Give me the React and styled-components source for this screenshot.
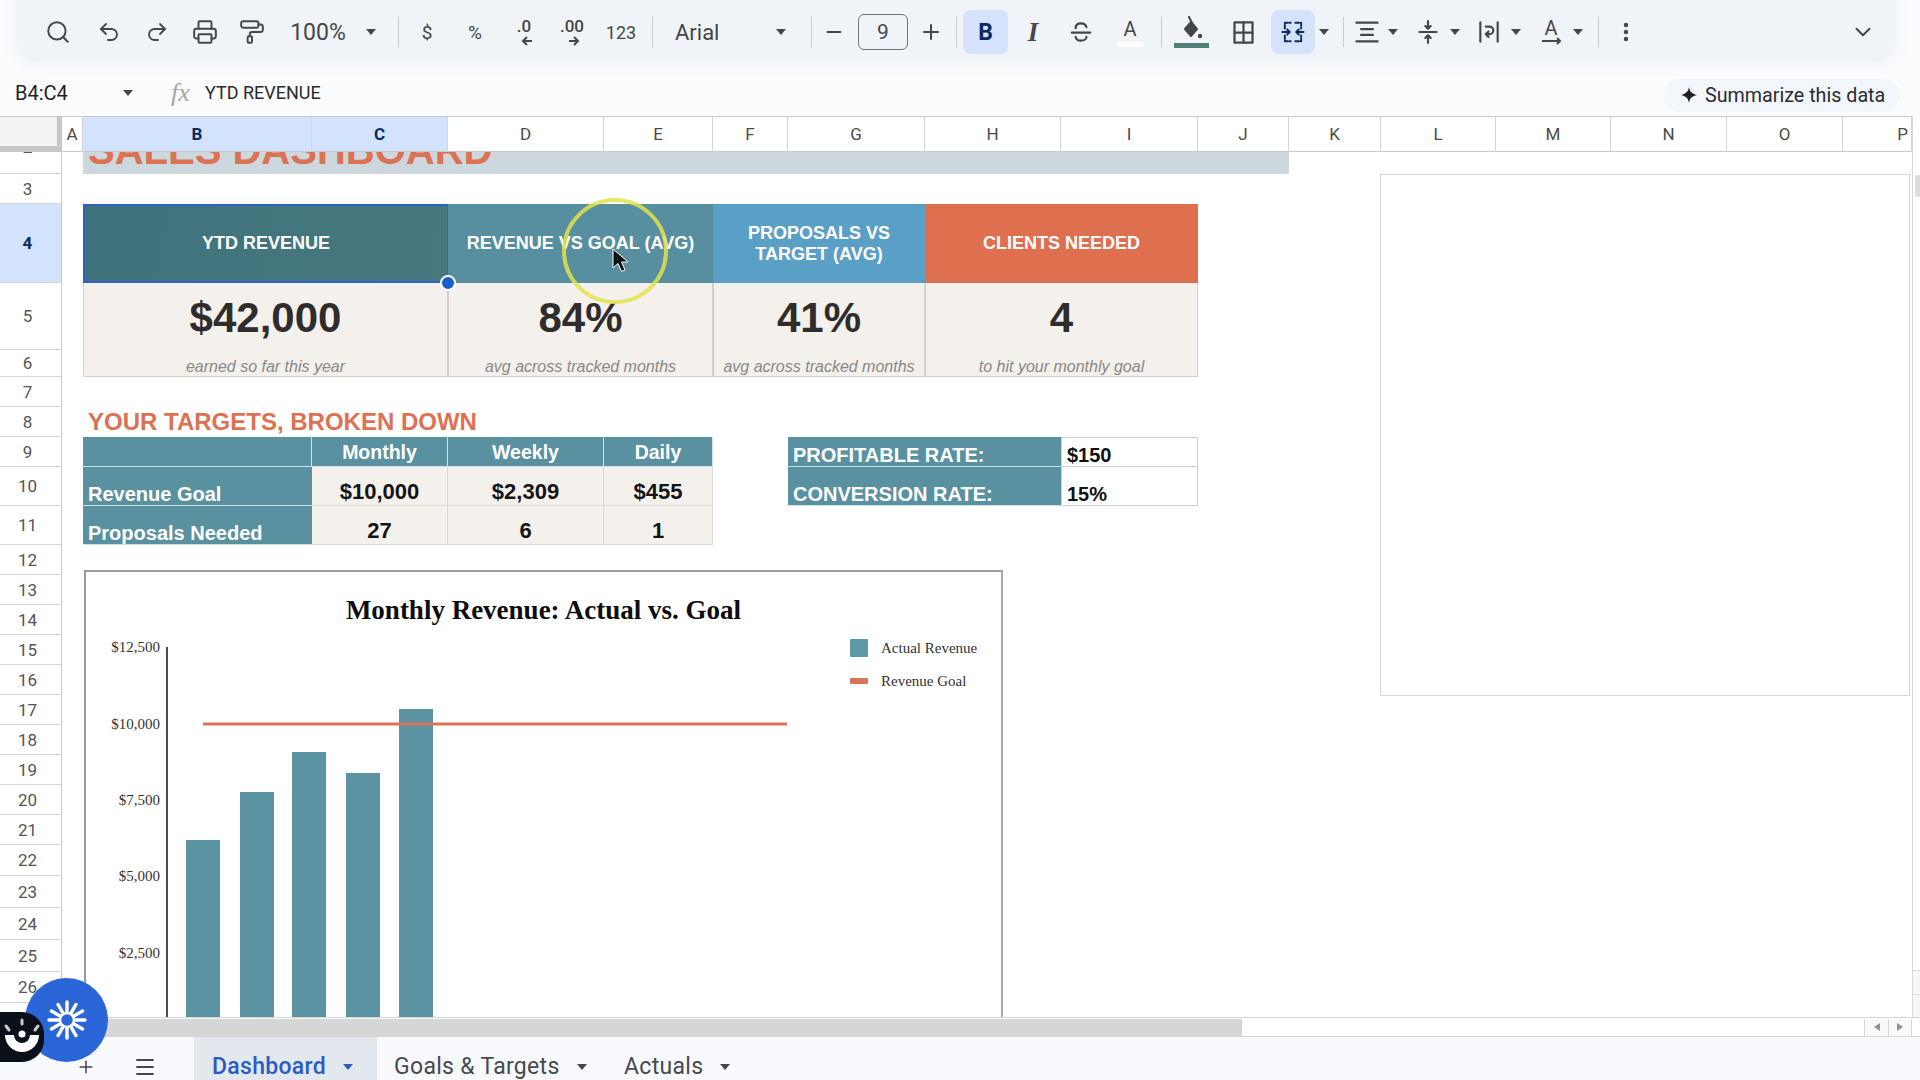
import React from "react";
import styled, { createGlobalStyle } from "styled-components";
import { Search, Undo2, Redo2, Printer, PaintRoller, MoreVertical, ChevronDown, Plus, Menu, Minus } from "lucide-react";

const Global = createGlobalStyle`
  html, body { margin: 0; padding: 0; background: #fff; overflow: hidden; }
  * { box-sizing: border-box; }
`;

const SANS = `"Liberation Sans", Arial, sans-serif`;
const UI = `Roboto, "Liberation Sans", sans-serif`;
const SERIF = `"Liberation Serif", "Times New Roman", serif`;
const TEAL = "#5a91a1";
const CREAM = "#f4f0ec";
const ORANGE = "#dc7254";
const INK = "#444746";

const Page = styled.div`
  position: relative;
  width: 1920px;
  height: 1080px;
  display: flex;
  flex-direction: column;
  overflow: hidden;
  background: #fbfcfe;
`;

const Toolbar = styled.div`
  flex: none;
  height: 62px;
  margin: 0 24px 0 16px;
  padding: 2px 16px 0 0;
  display: flex;
  align-items: center;
  background: #f0f4f9;
  border-radius: 0 0 20px 20px;
  box-shadow: 0 0 12px 6px #f4f7fb;
  color: ${INK};
`;

const Slot = styled.div`
  flex: none;
  width: ${(p) => p.$w}px;
  margin-left: ${(p) => p.$gap}px;
  height: 44px;
  display: flex;
  align-items: center;
  justify-content: ${(p) => p.$align || "center"};
  border-radius: 8px;
  background: ${(p) => (p.$active ? "#d6e2fb" : "transparent")};
  color: ${(p) => (p.$active ? "#0b2a63" : INK)};
  font-family: ${UI};
  white-space: nowrap;
`;

const ToolText = styled.span`
  font-family: ${UI};
  font-size: ${(p) => p.$size || 21}px;
  color: ${(p) => p.$color || INK};
`;

const Caret = styled.span`
  display: inline-block;
  flex: none;
  width: 0;
  height: 0;
  border-left: 5px solid transparent;
  border-right: 5px solid transparent;
  border-top: 6px solid ${(p) => p.$color || INK};
`;

const Sep = styled.span`
  display: block;
  width: 1px;
  height: 30px;
  background: #c9cdd2;
`;

const SizeBox = styled.div`
  width: 50px;
  height: 36px;
  border: 1.5px solid #6f7377;
  border-radius: 6px;
  display: flex;
  align-items: center;
  justify-content: center;
  font-family: ${UI};
  font-size: 21px;
  color: ${INK};
`;

const BoldB = styled.span`
  font-family: ${UI};
  font-size: 23px;
  font-weight: 700;
  color: #0b2a63;
`;

const ItalicI = styled.span`
  font-family: ${SERIF};
  font-size: 27px;
  font-style: italic;
  font-weight: 700;
  color: ${INK};
`;

const FillWrap = styled.div`
  display: flex;
  flex-direction: column;
  align-items: center;
  gap: 1px;
`;

const ColorBar = styled.span`
  display: block;
  width: ${(p) => p.$w}px;
  height: 5px;
  background: ${(p) => p.$color};
`;

const FormulaBar = styled.div`
  flex: none;
  height: 54px;
  display: flex;
  align-items: center;
  padding: 7px 20px 0 15px;
`;

const CellRef = styled.div`
  width: 108px;
  font-family: ${UI};
  font-size: 20px;
  color: #1f1f1f;
`;

const Fx = styled.span`
  margin-left: 38px;
  width: 34px;
  font-family: ${SERIF};
  font-size: 26px;
  font-style: italic;
  color: #a4a6a8;
`;

const FormulaText = styled.span`
  flex: 1;
  font-family: ${UI};
  font-size: 18px;
  color: #2a2a2a;
`;

const SummaryPill = styled.div`
  width: 236px;
  height: 33px;
  margin-top: 5px;
  display: flex;
  align-items: center;
  gap: 8px;
  padding-left: 17px;
  border-radius: 17px;
  background: #f3f6fb;
  font-family: ${UI};
  font-size: 19.7px;
  color: #2a2c30;
  white-space: nowrap;
`;

const Sheet = styled.div`
  position: relative;
  flex: none;
  height: 901px;
  overflow: hidden;
  background: #fff;
  display: grid;
  grid-template-columns: 62px 21px 229px 136px 156px 109px 75px 137px 136px 137px 91px 92px 115px 115px 116px 116px 69px 8px;
  grid-template-rows: 36px 22px 30px 79px 67px 27px 30px 30px 30px 39px 39px 30px 30px 30px 30px 30px 30px 30px 30px 30px 30px 31px 32px 32px 32px 31px 32px 40px;
`;

const Corner = styled.div`
  grid-column: 1;
  grid-row: 1;
  background: #f3f3f3;
  border-top: 1px solid #c9c9c9;
  border-right: 5px solid #c7c7c7;
  border-bottom: 6px solid #c7c7c7;
`;

const ColHead = styled.div`
  grid-column: ${(p) => p.$col};
  grid-row: 1;
  display: flex;
  align-items: center;
  justify-content: ${(p) => (p.$end ? "flex-end" : "center")};
  padding-right: ${(p) => (p.$end ? "3px" : "0")};
  background: ${(p) => (p.$on ? "#d3e3fd" : "#fff")};
  border-top: 1px solid #c9c9c9;
  border-right: 1px solid #d4d4d4;
  border-bottom: 1px solid #c9c9c9;
  font-family: ${UI};
  font-size: 17px;
  font-weight: ${(p) => (p.$on ? 700 : 400)};
  color: ${(p) => (p.$on ? "#0b2a63" : "#4a4a4a")};
`;

const RowHead = styled.div`
  grid-column: 1;
  grid-row: ${(p) => p.$row};
  display: flex;
  align-items: ${(p) => (p.$peek ? "flex-start" : "center")};
  justify-content: center;
  overflow: hidden;
  padding-right: 6px;
  background: ${(p) => (p.$on ? "#d3e3fd" : "#fff")};
  border-right: 1px solid #c9c9c9;
  border-bottom: 1px solid #d4d4d4;
  font-family: ${UI};
  font-size: 17px;
  line-height: 20px;
  font-weight: ${(p) => (p.$on ? 700 : 400)};
  color: ${(p) => (p.$on ? "#0b2a63" : "#555")};
`;

const PeekDigit = styled.span`
  margin-top: -15px;
`;

const TitleBand = styled.div`
  grid-column: 3 / 12;
  grid-row: 2;
  display: flex;
  align-items: flex-end;
  overflow: hidden;
  padding: 0 0 4px 5px;
  background: #ccd8dd;
  font-family: ${SANS};
  font-size: 40px;
  line-height: 40px;
  font-weight: 700;
  color: ${ORANGE};
  white-space: nowrap;
`;

const CardHead = styled.div`
  grid-column: ${(p) => p.$cols};
  grid-row: 4;
  display: flex;
  align-items: center;
  justify-content: center;
  text-align: center;
  padding: 0 8px;
  background: ${(p) => p.$bg};
  border: ${(p) => (p.$selected ? "2px solid #2f62c6" : "none")};
  border-right-width: ${(p) => (p.$selected ? "1px" : "0")};
  font-family: ${SANS};
  font-size: 18px;
  line-height: 21px;
  font-weight: 700;
  color: #fff;
`;

const CardValue = styled.div`
  grid-column: ${(p) => p.$cols};
  grid-row: 5;
  display: flex;
  align-items: center;
  justify-content: center;
  padding-top: 2px;
  background: ${CREAM};
  border-left: 1px solid #d2cfcc;
  border-right: 1px solid #d2cfcc;
  font-family: ${SANS};
  font-size: 42px;
  font-weight: 700;
  color: #2f2d2c;
`;

const CardSub = styled.div`
  grid-column: ${(p) => p.$cols};
  grid-row: 6;
  display: flex;
  align-items: flex-end;
  justify-content: center;
  padding-bottom: 1px;
  background: ${CREAM};
  border-left: 1px solid #d2cfcc;
  border-right: 1px solid #d2cfcc;
  border-bottom: 1.5px solid #d2cfcc;
  font-family: ${SANS};
  font-size: 16px;
  line-height: 17px;
  font-style: italic;
  color: #8a8886;
  white-space: nowrap;
`;

const SectionTitle = styled.div`
  grid-column: 3 / 9;
  grid-row: 8;
  display: flex;
  align-items: center;
  padding-left: 5px;
  font-family: ${SANS};
  font-size: 24px;
  font-weight: 700;
  color: ${ORANGE};
  white-space: nowrap;
`;

const TableHead = styled.div`
  grid-column: ${(p) => p.$col};
  grid-row: 9;
  display: flex;
  align-items: center;
  justify-content: center;
  padding-top: 1px;
  background: ${TEAL};
  border-right: 1.5px solid #cfe2e7;
  border-bottom: 1.5px solid #cfe2e7;
  font-family: ${SANS};
  font-size: 19.5px;
  font-weight: 700;
  color: #fff;
`;

const TableLabel = styled.div`
  grid-column: 3;
  grid-row: ${(p) => p.$row};
  display: flex;
  align-items: flex-end;
  padding-left: 5px;
  background: ${TEAL};
  border-bottom: 1.5px solid #cfe2e7;
  font-family: ${SANS};
  font-size: 20px;
  line-height: 21px;
  font-weight: 700;
  color: #fff;
  white-space: nowrap;
`;

const TableValue = styled.div`
  grid-column: ${(p) => p.$col};
  grid-row: ${(p) => p.$row};
  display: flex;
  align-items: flex-end;
  justify-content: center;
  background: ${CREAM};
  border-right: 1px solid #dcd8d4;
  border-bottom: 1px solid #dcd8d4;
  font-family: ${SANS};
  font-size: 22px;
  font-weight: 700;
  color: #141414;
`;

const RateLabel = styled.div`
  grid-column: 8 / 10;
  grid-row: ${(p) => p.$row};
  display: flex;
  align-items: flex-end;
  padding-left: 5px;
  background: ${TEAL};
  border-bottom: 1.5px solid #cfe2e7;
  font-family: ${SANS};
  font-size: 20px;
  line-height: 21px;
  font-weight: 700;
  color: #fff;
  white-space: nowrap;
`;

const RateValue = styled.div`
  grid-column: 10;
  grid-row: ${(p) => p.$row};
  display: flex;
  align-items: flex-end;
  padding-left: 5px;
  background: #fff;
  border: 1px solid #cfcfcf;
  border-top-width: ${(p) => (p.$row === 9 ? "1px" : "0")};
  font-family: ${SANS};
  font-size: 20px;
  line-height: 21px;
  font-weight: 700;
  color: #111;
`;

const VTrack = styled.div`
  grid-column: 18;
  grid-row: 1 / 29;
  position: relative;
  border-left: 1.5px solid #d8d8d8;
  background: #fff;
`;

const VThumb = styled.div`
  position: absolute;
  top: 59px;
  left: 2px;
  right: 0;
  height: 22px;
  border-radius: 3px 0 0 3px;
  background: #dcdcdc;
`;

const VArrow = styled.div`
  position: absolute;
  left: 0;
  right: 0;
  top: ${(p) => p.$top}px;
  height: 24px;
  border-top: 1px solid #d8d8d8;
  background: #f7f7f7;
`;

const Chart = styled.div`
  position: absolute;
  left: 84px;
  top: 454px;
  width: 919px;
  height: 520px;
  background: #fff;
  border: 2px solid #9b9b9b;
  border-bottom: none;
  border-right-color: #a8a8a8;
`;

const ChartTitle = styled.div`
  height: 40px;
  margin-top: 18px;
  display: flex;
  align-items: center;
  justify-content: center;
  font-family: ${SERIF};
  font-size: 27px;
  font-weight: 700;
  color: #0d0d0d;
`;

const PlotRow = styled.div`
  display: flex;
`;

const Plot = styled.svg`
  flex: none;
  display: block;
`;

const Legend = styled.div`
  display: flex;
  flex-direction: column;
  gap: 15px;
  padding-top: 9px;
`;

const LegendRow = styled.div`
  display: flex;
  align-items: center;
  gap: 13px;
  height: 18px;
  font-family: ${SERIF};
  font-size: 15px;
  color: #333;
  white-space: nowrap;
`;

const Swatch = styled.span`
  flex: none;
  width: 18px;
  height: ${(p) => p.$h}px;
  background: ${(p) => p.$color};
  border-radius: 1px;
`;

const BlankChart = styled.div`
  position: absolute;
  left: 1380px;
  top: 58px;
  width: 530px;
  height: 522px;
  background: #fff;
  border: 1.5px solid #d6d6d6;
`;

const Handle = styled.div`
  position: absolute;
  left: 440px;
  top: 159px;
  width: 16px;
  height: 16px;
  border-radius: 50%;
  background: #1a5ec9;
  border: 2px solid #fff;
`;

const CursorMark = styled.svg`
  position: absolute;
  left: 558px;
  top: 79px;
`;

const HScroll = styled.div`
  flex: none;
  height: 20px;
  display: flex;
  align-items: center;
  padding-left: 50px;
  background: #fff;
  border-top: 1.5px solid #d4d4d4;
  border-bottom: 1.5px solid #d4d4d4;
`;

const HThumb = styled.div`
  width: 1192px;
  height: 17px;
  background: #d6d6d6;
`;

const HSpacer = styled.div`
  flex: 1;
`;

const HArrow = styled.div`
  width: 24px;
  height: 17px;
  display: flex;
  align-items: center;
  justify-content: center;
  border-left: 1px solid #d4d4d4;
  background: #f9f9f9;
  &:last-of-type { margin-right: 8px; border-right: 1px solid #d4d4d4; }
`;

const ArrowGlyph = styled.span`
  width: 0;
  height: 0;
  border-top: 4px solid transparent;
  border-bottom: 4px solid transparent;
  ${(p) => (p.$left ? "border-right: 6px solid #909090;" : "border-left: 6px solid #909090;")}
`;

const TabBar = styled.div`
  flex: 1;
  display: flex;
  align-items: stretch;
  padding-left: 76px;
  background: #f8f9fc;
`;

const TabIcon = styled.div`
  width: ${(p) => p.$w}px;
  display: flex;
  align-items: center;
  justify-content: center;
  padding-top: 16px;
  color: ${INK};
`;

const Tab = styled.div`
  width: ${(p) => p.$w}px;
  display: flex;
  align-items: center;
  gap: 17px;
  padding: 16px 0 0 ${(p) => p.$pad}px;
  background: ${(p) => (p.$on ? "#e3e7ee" : "transparent")};
  font-family: ${UI};
  font-size: 23px;
  font-weight: ${(p) => (p.$on ? 500 : 400)};
  color: ${(p) => (p.$on ? "#2a5cc4" : "#464a4d")};
  letter-spacing: 0.3px;
  white-space: nowrap;
`;

const BlueBubble = styled.div`
  position: absolute;
  left: 25px;
  top: 978px;
  width: 83px;
  height: 84px;
  display: flex;
  align-items: center;
  justify-content: center;
  border-radius: 50%;
  background: #2b66d9;
`;

const DarkBadge = styled.div`
  position: absolute;
  left: 0;
  top: 1012px;
  width: 44px;
  height: 50px;
  display: flex;
  align-items: center;
  justify-content: center;
  border-radius: 0 22px 22px 0;
  background: #0b0f1a;
`;

const S = { fill: "none", stroke: "currentColor", strokeWidth: 2, strokeLinecap: "round", strokeLinejoin: "round" };

const Ico = ({ children, size = 26, width = 2 }) => (
  <svg width={size} height={size} viewBox="0 0 24 24" {...S} strokeWidth={width}>{children}</svg>
);

const Decimal = ({ label, dir, w }) => (
  <svg width={w} height="32" viewBox={`0 0 ${w} 32`} fill="none">
    <text x={w / 2} y="16" textAnchor="middle" fontFamily="Roboto, sans-serif" fontWeight="500" fontSize="17" fill={INK}>{label}</text>
    {dir === "l" ? (
      <path d={`M${w / 2 + 8} 25h-9 M${w / 2 + 3} 21l-4 4 4 4`} stroke={INK} strokeWidth="2" />
    ) : (
      <path d={`M${w / 2 - 3} 25h9 M${w / 2 + 2} 21l4 4-4 4`} stroke={INK} strokeWidth="2" />
    )}
  </svg>
);

const tools = [
  [58, 30, <Search size={26} strokeWidth={1.8} />],
  [109, 30, <Undo2 size={24} strokeWidth={1.8} />],
  [157, 30, <Redo2 size={24} strokeWidth={1.8} />],
  [205, 30, <Printer size={26} strokeWidth={1.8} />],
  [252, 30, <PaintRoller size={26} strokeWidth={1.8} />],
  [318, 60, <ToolText $size={23}>100%</ToolText>],
  [371, 14, <Caret />],
  [398, 3, <Sep />],
  [427, 20, <ToolText $size={19}>$</ToolText>],
  [475, 24, <ToolText $size={19}>%</ToolText>],
  [524, 34, <Decimal label=".0" dir="l" w={34} />],
  [572, 36, <Decimal label=".00" dir="r" w={36} />],
  [621, 36, <ToolText $size={18}>123</ToolText>],
  [652, 3, <Sep />],
  [720, 90, <ToolText $size={22}>Arial</ToolText>, "flex-start"],
  [781, 14, <Caret />],
  [811, 3, <Sep />],
  [834, 24, <Minus size={22} strokeWidth={2} />],
  [883, 50, <SizeBox>9</SizeBox>],
  [931, 28, <Plus size={24} strokeWidth={2} />],
  [956, 3, <Sep />],
  [985.5, 45, <BoldB>B</BoldB>, "center", true],
  [1033, 30, <ItalicI>I</ItalicI>],
  [1081, 30, (
    <Ico size={26}>
      <path d="M7 8.5C7 5 9.5 4 12 4s4.5 1.2 5 3.5" />
      <path d="M3.5 12.5h17" />
      <path d="M7 16.5c.4 2.400 2.500 3.500 5 3.500s5-1.200 5-3.500" />
    </Ico>
  )],
  [1130, 30, (
    <FillWrap>
      <ToolText $size={20}>A</ToolText>
      <ColorBar $w={26} $color="#ffffff" />
    </FillWrap>
  )],
  [1161, 3, <Sep />],
  [1191, 36, (
    <FillWrap>
      <svg width="24" height="26" viewBox="0 0 24 26" fill="none">
        <path d="M10 1l3 6" stroke={INK} strokeWidth="2" strokeLinecap="round" />
        <path d="M12 6l6 7-6 7-6-7z" fill={INK} stroke={INK} strokeWidth="2" strokeLinejoin="round" />
        <circle cx="21" cy="20" r="2.200" fill={INK} />
      </svg>
      <ColorBar $w={35} $color="#4f7f78" />
    </FillWrap>
  )],
  [1243, 30, (
    <Ico size={27}>
      <rect x="4" y="3" width="16" height="18" />
      <path d="M12 3v18M4 12h16" />
    </Ico>
  )],
  [1293, 44, (
    <Ico size={28} width={1.7}>
      <path d="M5 9V4h5M14 4h5v5M5 15v5h5M14 20h5v-5" strokeDasharray="3 1.500" />
      <path d="M3 12h6M7 9.800l2.200 2.200L7 14.200M21 12h-6M17 9.800 14.800 12l2.200 2.200" />
    </Ico>
  ), "center", true],
  [1324, 14, <Caret />],
  [1343, 3, <Sep />],
  [1367, 28, (
    <Ico size={28}>
      <path d="M3 4h18M7 9.500h10M7 14.500h10M3 20h18" />
    </Ico>
  )],
  [1393, 14, <Caret />],
  [1428, 28, (
    <Ico size={26}>
      <path d="M4 12h16M12 2v6.500M9.500 6.500l2.500 2.500 2.500-2.500M12 22v-6.500M9.500 17.500l2.500-2.500 2.500 2.500" />
    </Ico>
  )],
  [1455, 14, <Caret />],
  [1489, 28, (
    <Ico size={26}>
      <path d="M4 3v18M20 3v18M9 7h3.500a3.500 3.500 0 0 1 0 7H9M11.500 11.500 9 14l2.500 2.500" />
    </Ico>
  )],
  [1516, 14, <Caret />],
  [1551, 28, (
    <svg width="28" height="30" viewBox="0 0 28 30" fill="none">
      <text x="14" y="18" textAnchor="middle" fontFamily="Roboto, sans-serif" fontSize="20" fill={INK}>A</text>
      <path d="M5 24h18M20 21l3 3-3 3" stroke={INK} strokeWidth="2" />
    </svg>
  )],
  [1578, 14, <Caret />],
  [1598, 3, <Sep />],
  [1626, 24, <MoreVertical size={24} strokeWidth={2.400} />],
  [1863, 30, <ChevronDown size={26} strokeWidth={1.800} />],
];

const OFFSET = 16;
const placed = tools.reduce(
  (acc, [center, w, node, align, active]) => {
    const start = center - w / 2;
    acc.items.push({ gap: start - acc.end, w, node, align, active, key: center });
    acc.end = start + w;
    return acc;
  },
  { items: [], end: OFFSET }
).items;

const columns = ["A", "B", "C", "D", "E", "F", "G", "H", "I", "J", "K", "L", "M", "N", "O", "P"];
const rows = Array.from({ length: 25 }, (_, i) => i + 3);

const cards = [
  { cols: "3 / 5", head: "YTD REVENUE", value: "$42,000", sub: "earned so far this year", bg: "linear-gradient(100deg,#3f727c,#47787f)", selected: true },
  { cols: "5 / 7", head: "REVENUE VS GOAL (AVG)", value: "84%", sub: "avg across tracked months", bg: "#578fa0" },
  { cols: "7 / 9", head: <>PROPOSALS VS<br />TARGET (AVG)</>, value: "41%", sub: "avg across tracked months", bg: "#5a9fc6" },
  { cols: "9 / 11", head: "CLIENTS NEEDED", value: "4", sub: "to hit your monthly goal", bg: "#de7050" },
];

const tableRows = [
  { row: 10, label: "Revenue Goal", values: ["$10,000", "$2,309", "$455"] },
  { row: 11, label: "Proposals Needed", values: ["27", "6", "1"] },
];

const ticks = [["$12,500", 17], ["$10,000", 94], ["$7,500", 170], ["$5,000", 245.5], ["$2,500", 322.6]];
const bars = [[100, 210], [154, 162], [206, 122], [260, 143], [313, 79]];

const spokes = Array.from({ length: 12 }, (_, i) => i * 30);

export default function App() {
  return (
    <Page>
      <Global />
      <Toolbar>
        {placed.map((t) => (
          <Slot key={t.key} $w={t.w} $gap={t.gap} $align={t.align} $active={t.active}>{t.node}</Slot>
        ))}
      </Toolbar>

      <FormulaBar>
        <CellRef>B4:C4</CellRef>
        <Caret />
        <Fx>fx</Fx>
        <FormulaText>YTD REVENUE</FormulaText>
        <SummaryPill>
          <svg width="16" height="16" viewBox="0 0 16 16"><path d="M8 0c.8 4.600 2.400 6.400 8 8-5.600 1.600-7.200 3.400-8 8-.8-4.600-2.400-6.400-8-8 5.600-1.600 7.200-3.400 8-8z" fill="#1f1f1f" /></svg>
          Summarize this data
        </SummaryPill>
      </FormulaBar>

      <Sheet>
        <Corner />
        {columns.map((c, i) => (
          <ColHead key={c} $col={i + 2} $on={c === "B" || c === "C"} $end={c === "P"}>{c}</ColHead>
        ))}
        <RowHead $row={2} $peek><PeekDigit>2</PeekDigit></RowHead>
        {rows.map((r) => (
          <RowHead key={r} $row={r} $on={r === 4}>{r}</RowHead>
        ))}

        <TitleBand>SALES DASHBOARD</TitleBand>

        {cards.map((c) => (
          <React.Fragment key={c.cols}>
            <CardHead $cols={c.cols} $bg={c.bg} $selected={c.selected}><span>{c.head}</span></CardHead>
            <CardValue $cols={c.cols}>{c.value}</CardValue>
            <CardSub $cols={c.cols}>{c.sub}</CardSub>
          </React.Fragment>
        ))}

        <SectionTitle>YOUR TARGETS, BROKEN DOWN</SectionTitle>
        <TableHead $col={3} />
        <TableHead $col={4}>Monthly</TableHead>
        <TableHead $col={5}>Weekly</TableHead>
        <TableHead $col={6}>Daily</TableHead>
        {tableRows.map((r) => (
          <React.Fragment key={r.row}>
            <TableLabel $row={r.row}>{r.label}</TableLabel>
            {r.values.map((v, i) => (
              <TableValue key={v} $row={r.row} $col={i + 4}>{v}</TableValue>
            ))}
          </React.Fragment>
        ))}

        <RateLabel $row={9}>PROFITABLE RATE:</RateLabel>
        <RateValue $row={9}>$150</RateValue>
        <RateLabel $row={10}>CONVERSION RATE:</RateLabel>
        <RateValue $row={10}>15%</RateValue>

        <VTrack>
          <VThumb />
          <VArrow $top={854} />
          <VArrow $top={878} />
        </VTrack>

        <Chart>
          <ChartTitle>Monthly Revenue: Actual vs. Goal</ChartTitle>
          <PlotRow>
            <Plot width="764" height="420" viewBox="0 0 764 420">
              {ticks.map(([t, y]) => (
                <text key={t} x="74" y={y + 5} textAnchor="end" fontFamily='"Liberation Serif", serif' fontSize="15" fill="#333">{t}</text>
              ))}
              <line x1="81" y1="17" x2="81" y2="420" stroke="#111" strokeWidth="1.5" />
              {bars.map(([x, y]) => (
                <rect key={x} x={x} y={y} width="34" height={420 - y} fill="#5b93a3" />
              ))}
              <line x1="117" y1="94" x2="701" y2="94" stroke="#d9735a" strokeWidth="3" />
            </Plot>
            <Legend>
              <LegendRow><Swatch $h={18} $color="#5b9aa6" />Actual Revenue</LegendRow>
              <LegendRow><Swatch $h={6} $color="#d9735a" />Revenue Goal</LegendRow>
            </Legend>
          </PlotRow>
        </Chart>

        <BlankChart />
        <Handle />
        <CursorMark width="120" height="118" viewBox="0 0 120 118" fill="none">
          <circle cx="57" cy="56" r="51" stroke="#e2e24e" strokeOpacity="0.85" strokeWidth="4" />
          <path d="M55 54v19l5-4.500 3.500 8 3.500-1.500-3.500-8h6.500z" fill="#111" stroke="#fff" strokeWidth="1" />
        </CursorMark>
      </Sheet>

      <HScroll>
        <HThumb />
        <HSpacer />
        <HArrow><ArrowGlyph $left /></HArrow>
        <HArrow><ArrowGlyph /></HArrow>
      </HScroll>

      <TabBar>
        <TabIcon $w={20}><Plus size={22} strokeWidth={1.800} /></TabIcon>
        <TabIcon $w={98}><Menu size={24} strokeWidth={1.800} /></TabIcon>
        <Tab $w={183} $on $pad={18}>Dashboard<Caret $color="#2a5cc4" /></Tab>
        <Tab $w={230} $pad={17}>Goals &amp; Targets<Caret /></Tab>
        <Tab $w={160} $pad={17}>Actuals<Caret /></Tab>
      </TabBar>

      <BlueBubble>
        <svg width="40" height="40" viewBox="-20 -20 40 40" fill="none">
          {spokes.map((a) => (
            <line key={a} x1="0" y1="-8" x2="0" y2="-18" stroke="#fff" strokeWidth="3.400" strokeLinecap="round" transform={`rotate(${a})`} />
          ))}
          <circle r="7" stroke="#fff" strokeWidth="2.500" />
        </svg>
      </BlueBubble>
      <DarkBadge>
        <svg width="42" height="44" viewBox="0 0 42 44" fill="none">
          <path d="M4 20a17 17 0 0 0 34 0h-9a8 8 0 0 1-16 0z" fill="#fff" />
          <circle cx="21" cy="19" r="3.500" fill="#fff" />
          <path d="M5 11l3 4M21 5v4M37 11l-3 4" stroke="#c9c9c9" strokeWidth="3" strokeLinecap="round" />
        </svg>
      </DarkBadge>
    </Page>
  );
}
